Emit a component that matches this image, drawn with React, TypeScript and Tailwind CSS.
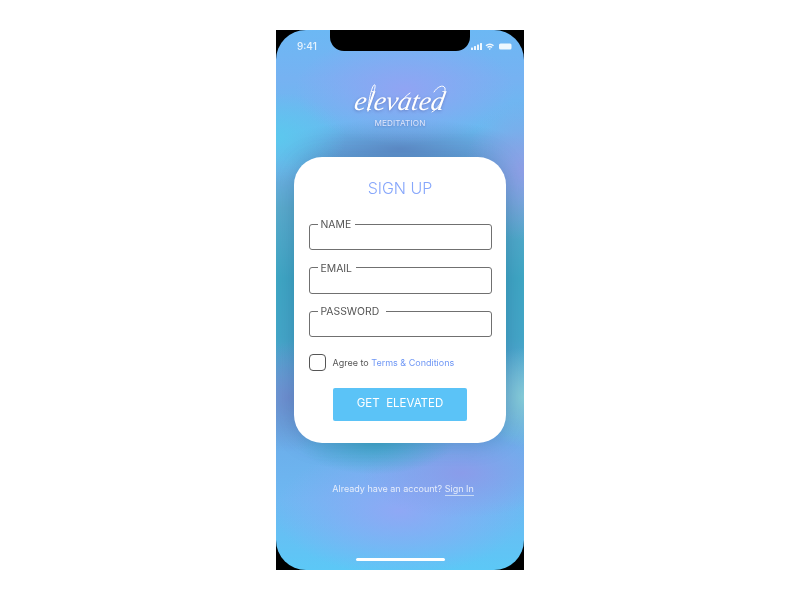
import React from "react";

const Field = ({ label, extra }: { label: string; extra: string }) => (
  <fieldset className="h-[33px] w-[183px] rounded-[3px] border border-[#707070] pl-[8px]">
    <legend className={`h-[14px] pl-[3px] text-[10.4px] leading-[16px] text-[#555555] ${extra}`}>{label}</legend>
  </fieldset>
);

export default function App() {
  return (
    <div className="flex h-screen w-full items-center justify-center bg-white font-['Inter',sans-serif]">
      <div className="relative h-[540px] w-[248px] overflow-hidden bg-black blur-[0.4px]">
        <div className="flex h-full w-full flex-col items-center overflow-hidden rounded-[30px] bg-[radial-gradient(ellipse_110px_55px_at_52%_11%,#90a4f3_0%,rgba(144,164,243,0)_100%),radial-gradient(ellipse_70px_45px_at_0%_20%,#5cc8ee_0%,rgba(92,200,238,0)_100%),radial-gradient(ellipse_60px_70px_at_100%_26%,#8f9fe6_0%,rgba(143,159,230,0)_100%),radial-gradient(ellipse_45px_50px_at_100%_68%,#86ccd8_0%,rgba(134,204,216,0)_100%),radial-gradient(ellipse_60px_55px_at_5%_68%,#6f8fd0_0%,rgba(111,143,208,0)_100%),radial-gradient(ellipse_80px_34px_at_40%_76%,#3fa8c8_0%,rgba(63,168,200,0)_100%),radial-gradient(ellipse_100px_45px_at_75%_82%,#8a9cea_0%,rgba(138,156,234,0)_100%),radial-gradient(ellipse_125px_65px_at_50%_89%,#8fa8f5_0%,rgba(143,168,245,0)_100%),radial-gradient(ellipse_125px_30px_at_50%_22%,#5f8dc8_0%,rgba(95,141,200,0)_100%),linear-gradient(180deg,#6cb8f4_0%,#76b2f2_9%,#68baf0_18.5%,#6cb0e4_26%,#5aaacc_33%,#3fa6c4_46%,#44a6c8_57%,#64a8dc_68.5%,#6cb0ec_78%,#6eb8f2_87%,#5cc8f6_100%)]">
          <div className="flex h-[30px] w-full shrink-0 items-center justify-between pt-[2px] pl-[21px] pr-[12px]">
            <span className="text-[10px] font-medium leading-none text-[#e8f4fd]">9:41</span>
            <svg width="41" height="9" viewBox="0 0 41 9" fill="#eef7fe" className="mt-[1px]">
              <rect x="0" y="5.5" width="2" height="2.5" rx="0.5" />
              <rect x="3" y="4" width="2" height="4" rx="0.5" />
              <rect x="6" y="2.5" width="2" height="5.5" rx="0.5" />
              <rect x="9" y="1" width="2" height="7" rx="0.5" />
              <path d="M14.5 3.2a6.5 6.5 0 0 1 8.5 0l-1 1.1a5 5 0 0 0-6.5 0zM16 5a4 4 0 0 1 5.5 0l-1 1.1a2.5 2.5 0 0 0-3.5 0zM17.6 6.8a1.6 1.6 0 0 1 2.3 0l-1.15 1.2z" />
              <rect x="28" y="1.5" width="12.5" height="6" rx="1.5" />
            </svg>
          </div>

          <div className="mt-[20px] flex h-[52px] w-full shrink-0 flex-col items-center">
            <div className="relative h-[38px] w-[100px] text-center">
              <span className="block -skew-x-[10deg] pt-[2px] font-['Liberation_Serif',serif] text-[27px] italic leading-[38px] text-white [text-shadow:0_1px_3px_rgba(60,70,140,0.45)]">
                elevated
              </span>
              <svg
                className="absolute left-0 top-0"
                width="100"
                height="38"
                viewBox="0 0 100 38"
                fill="none"
                stroke="white"
                strokeWidth="1"
                strokeLinecap="round"
              >
                <path d="M18 31 C20 22 26 9 25 5 C23 3 19 16 18 31" />
                <path d="M50 23 C53 19 57 15 60 13" />
                <path d="M82 32 C90 28 96 14 95 8 C93 4 87 7 84 12" />
              </svg>
            </div>
            <span className="text-[8.2px] leading-[10px] tracking-[0.1px] text-[#dfe6fb] [text-shadow:0_1px_2px_rgba(60,70,140,0.35)]">
              MEDITATION
            </span>
          </div>

          <div className="mt-[25px] flex h-[286px] w-[212px] shrink-0 flex-col items-center rounded-[28px] bg-white pt-[21px] shadow-[0_0_22px_rgba(30,70,120,0.28)]">
            <h1 className="text-[16px] font-light leading-[20px] text-[#86a6fb]">SIGN UP</h1>
            <div className="mt-[19px] flex flex-col gap-[10.5px]">
              <Field label="NAME" extra="pr-[4px]" />
              <Field label="EMAIL" extra="pr-[4px]" />
              <Field label="PASSWORD" extra="pr-[7px]" />
            </div>
            <div className="mt-[17px] flex w-[183px] items-center gap-[7px]">
              <span className="h-[17px] w-[17px] rounded-[4px] border border-[#555555]" />
              <span className="text-[9px] leading-[12px] text-[#555555]">
                Agree to <span className="text-[#6f97f5]">Terms &amp; Conditions</span>
              </span>
            </div>
            <button className="mt-[16.5px] h-[33px] w-[134px] rounded-[2px] bg-[#5bc3f7] text-[11.5px] leading-none text-white">
              GET&nbsp; ELEVATED
            </button>
          </div>

          <p className="mt-[40px] ml-[6px] text-[9px] leading-[12px] text-[#e6edfb]">
            Already have an account? <span className="border-b border-[#c8daf5] pb-[1px]">Sign In</span>
          </p>
          <div className="mt-auto mb-[9px] h-[3px] w-[89px] rounded-full bg-white" />
        </div>
        <div className="absolute left-[54px] top-0 h-[21px] w-[140px] rounded-b-[14px] bg-black" />
      </div>
    </div>
  );
}
